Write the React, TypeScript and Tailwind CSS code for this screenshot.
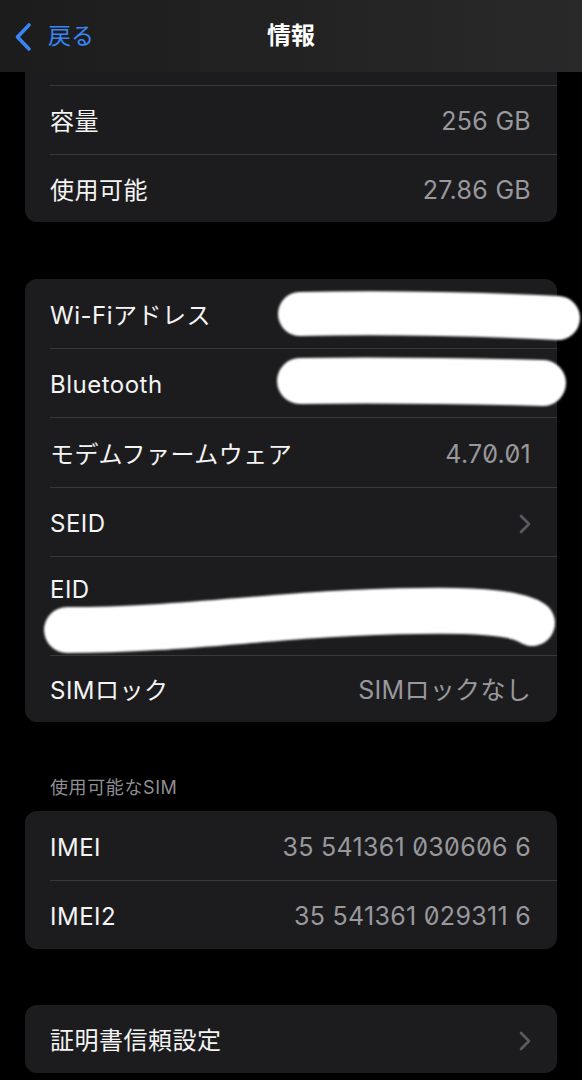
import React from "react"

const font = "font-['Inter','Noto_Sans_CJK_JP',sans-serif]"

function Sep() {
  return <div className="ml-[25px] h-px bg-[#38383a]" />
}

function Chevron() {
  return (
    <svg width="12" height="20" viewBox="0 0 12 20" fill="none">
      <path d="M2 2l8 8-8 8" stroke="#5b5b5f" strokeWidth="2.6" strokeLinecap="round" strokeLinejoin="round" />
    </svg>
  )
}

function Row({
  label,
  value,
  chevron,
  h = "h-[68px]",
  children,
}: {
  label: string
  value?: string
  chevron?: boolean
  h?: string
  children?: React.ReactNode
}) {
  return (
    <div className={`relative flex items-center justify-between pl-[25px] pr-[26px] pt-[4px] ${h}`}>
      <span className="text-[24px] tracking-[0.5px] text-[#f4f4f4]">{label}</span>
      {value && (
        <span className="text-[25px] tracking-[0.3px] text-[#98989d] [font-feature-settings:'zero']">{value}</span>
      )}
      {chevron && <Chevron />}
      {children}
    </div>
  )
}

function Scribble({ id, className, w, h, d, sw }: { id: string; className: string; w: number; h: number; d: string; sw: number }) {
  return (
    <svg className={`absolute ${className}`} width={w} height={h} viewBox={`0 0 ${w} ${h}`} fill="none">
      <defs>
        <filter id={id} filterUnits="userSpaceOnUse" x="0" y="0" width={w} height={h}>
          <feGaussianBlur stdDeviation="0.9" />
        </filter>
      </defs>
      <path d={d} stroke="#ffffff" strokeWidth={sw} strokeLinecap="round" strokeLinejoin="round" filter={`url(#${id})`} />
    </svg>
  )
}

export default function App() {
  return (
    <div className={`min-h-[1080px] w-full bg-black ${font} antialiased`}>
      {/* nav bar */}
      <div className="grid h-[72px] grid-cols-[1fr_auto_1fr] items-center bg-linear-to-r from-[#1c1c1c] to-[#292929]">
        <div className="flex items-center gap-[16px] pl-[14px] text-[#3a85f5]">
          <svg width="18" height="30" viewBox="0 0 18 30" fill="none" className="mt-[1px]">
            <path d="M15 3L3.5 15 15 27" stroke="#3a85f5" strokeWidth="3.6" strokeLinecap="round" strokeLinejoin="round" />
          </svg>
          <span className="text-[23px]">戻る</span>
        </div>
        <span className="text-[24px] font-bold text-white">情報</span>
        <div />
      </div>

      {/* storage */}
      <div className="mx-[25px] rounded-b-[12px] bg-[#1c1c1e]">
        <div className="h-[13px]" />
        <Sep />
        <Row label="容量" value="256 GB" />
        <Sep />
        <Row label="使用可能" value="27.86 GB" h="h-[67px]" />
      </div>

      {/* network */}
      <div className="mx-[25px] mt-[57px] rounded-[12px] bg-[#1c1c1e]">
        <Row label="Wi-Fiアドレス" h="h-[69px]">
          <Scribble id="s1" className="left-[250px] top-[8px]" w={310} h={56} sw={44} d="M25 27 C120 25, 200 27, 283 31" />
        </Row>
        <Sep />
        <Row label="Bluetooth">
          <Scribble id="s2" className="left-[250px] top-[3px]" w={300} h={58} sw={46} d="M25 29 C110 28, 190 29, 268 31" />
        </Row>
        <Sep />
        <Row label="モデムファームウェア" value="4.70.01" h="h-[69px]" />
        <Sep />
        <Row label="SEID" chevron />
        <Sep />
        <div className="relative h-[98px] pl-[25px] pt-[15px]">
          <span className="text-[24px] tracking-[0.5px] text-[#f4f4f4]">EID</span>
          <Scribble
            id="s3"
            className="left-[15px] top-[25px]"
            w={530}
            h={80}
            sw={46}
            d="M27 48 C150 48, 250 30, 380 29 C445 28, 478 32, 492 41"
          />
        </div>
        <Sep />
        <Row label="SIMロック" value="SIMロックなし" h="h-[66px]" />
      </div>

      {/* sim */}
      <div className="mt-[55px] pl-[50px] text-[18px] leading-[22px] tracking-[0.6px] text-[#8e8e93]">使用可能なSIM</div>
      <div className="mx-[25px] mt-[12px] rounded-[12px] bg-[#1c1c1e]">
        <Row label="IMEI" value="35 541361 030606 6" h="h-[69px]" />
        <Sep />
        <Row label="IMEI2" value="35 541361 029311 6" />
      </div>

      {/* certificates */}
      <div className="mx-[25px] mt-[56px] rounded-[12px] bg-[#1c1c1e]">
        <Row label="証明書信頼設定" chevron />
      </div>
    </div>
  )
}
